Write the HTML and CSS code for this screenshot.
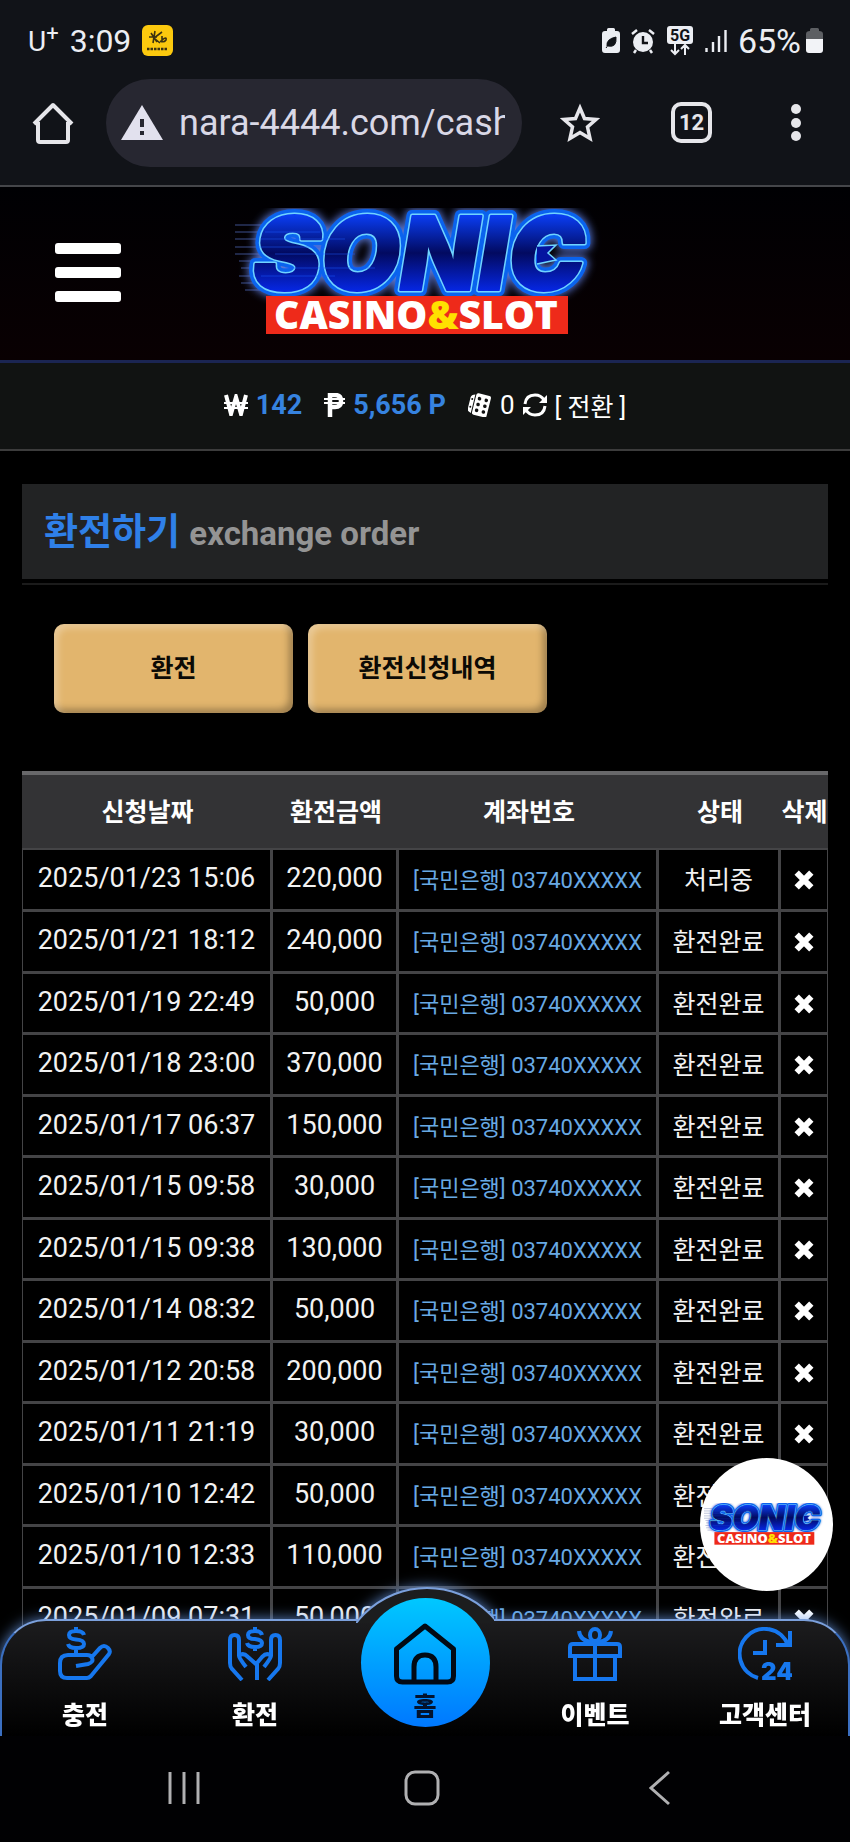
FILE: index.html
```html
<!DOCTYPE html>
<html lang="ko">
<head>
    <meta charset="UTF-8">
    <meta name="viewport" content="width=device-width, initial-scale=1.0">
    <title>환전하기</title>
    <link rel="stylesheet" href="styles.css">
</head>
<body>
    <!-- Shared shapes -->
    <svg class="defs" width="0" height="0" aria-hidden="true">
        <defs>
            <linearGradient id="logo-fill" x1="0" y1="0" x2="0" y2="1">
                <stop offset="0.2" stop-color="#0a3cf0"/>
                <stop offset="0.5" stop-color="#020a60"/>
                <stop offset="0.8" stop-color="#0626e0"/>
            </linearGradient>
            <filter id="logo-glow" x="-10%" y="-30%" width="120%" height="160%">
                <feGaussianBlur stdDeviation="4"/>
            </filter>
            <symbol id="logo" viewBox="0 0 380 130">
                <g stroke="#3d4f8c" stroke-width="1">
                    <path d="M0 17H40M-4 24H40M-4 31H38M-7 39H36M-2 46H34M4 53H30M6 60H26M4 68H22M6 75H24M10 82H26"/>
                </g>
                <g class="logo-word">
                    <text x="18" y="82" fill="#6b8cff" stroke="#5a78d8" stroke-width="14" filter="url(#logo-glow)">SONIC</text>
                    <text x="18" y="82" fill="#0a5ff0" stroke="#0a63ee" stroke-width="12">SONIC</text>
                    <text x="18" y="82" fill="#6fd3ff" stroke="#6fd3ff" stroke-width="5">SONIC</text>
                    <text x="18" y="82" fill="url(#logo-fill)" stroke="url(#logo-fill)" stroke-width="2">SONIC</text>
                </g>
                <path d="M302 38L321 37L313 45L321 52L302 56" fill="#0414a0" stroke="#6fd3ff" stroke-width="1.500"/>
                <g stroke="#1b5bff" stroke-width="1" opacity="0.5">
                    <path d="M30 24H85M26 31H110M24 39H90M40 46H120M50 60H140M26 68H100"/>
                </g>
                <rect x="31" y="88" width="302" height="38" fill="#ee2a1a"/>
                <text class="logo-sub" x="181" y="121" text-anchor="middle">CASINO<tspan fill="#ffe100">&amp;</tspan>SLOT</text>
            </symbol>
            <symbol id="times" viewBox="0 0 18 18">
                <path d="M3 3L15 15M15 3L3 15" stroke="#fff" stroke-width="5"/>
            </symbol>
        </defs>
    </svg>

    <!-- Phone status bar -->
    <div class="status-bar">
        <div class="status-left">
            <span class="carrier">U<sup>+</sup></span>
            <span class="clock">3:09</span>
            <svg width="31" height="31" viewBox="0 0 31 31">
                <rect width="31" height="31" rx="6" fill="#fcc90e"/>
                <path d="M7 12L15 12M9 8L15 17M13 6L11 18M20 7L12 13L18 18M20 11V16M20 15Q25 11 24 15Q22 18 18 16" fill="none" stroke="#3b3211" stroke-width="1.6"/>
                <path d="M5 24H26" stroke="#3b3211" stroke-width="2.4" stroke-dasharray="2.5 1"/>
            </svg>
        </div>
        <div class="status-right">
            <svg width="18" height="26" viewBox="0 0 18 26">
                <path d="M5 3V1.500Q5 0 6.500 0H11.500Q13 0 13 1.500V3H15Q18 3 18 6V22Q18 25 15 25H3Q0 25 0 22V6Q0 3 3 3Z" fill="#eceef3"/>
                <path d="M4 20L7 16M5 18Q4 11 14 9Q15 20 6 18" fill="#111318" stroke="#111318"/>
            </svg>
            <svg width="24" height="26" viewBox="0 0 24 26">
                <circle cx="12" cy="14" r="10" fill="#eceef3"/>
                <path d="M1 6L6 2M23 6L18 2M5 22L3 25M19 22L21 25" stroke="#eceef3" stroke-width="2.500"/>
                <path d="M12 8V15H17" fill="none" stroke="#111318" stroke-width="2.400"/>
            </svg>
            <svg class="network" width="28" height="30" viewBox="0 0 28 30">
                <rect x="1" width="26" height="18" rx="3" fill="#eceef3"/>
                <text x="14" y="15" text-anchor="middle">5G</text>
                <path d="M9 18V28M5 24L9 28L13 24M19 29V19M15 23L19 19L23 23" fill="none" stroke="#eceef3" stroke-width="2"/>
            </svg>
            <svg width="22" height="24" viewBox="0 0 22 24">
                <path d="M1.500 19V23M8 13V23M14 7V23M20.500 1V23" stroke="#eceef3" stroke-width="2.400"/>
            </svg>
            <span class="battery-level">65%</span>
            <svg width="17" height="25" viewBox="0 0 17 25">
                <path d="M4 3V1.500Q4 0 5.500 0H11.500Q13 0 13 1.500V3Q17 3 17 6V11H0V6Q0 3 4 3Z" fill="#5d5f63"/>
                <path d="M0 11H17V22Q17 25 14 25H3Q0 25 0 22Z" fill="#f2f3f7"/>
            </svg>
        </div>
    </div>

    <!-- Browser toolbar -->
    <div class="toolbar">
        <button class="icon-btn" aria-label="home">
            <svg width="42" height="42" viewBox="0 0 42 42" fill="none" stroke="#e6e6ea" stroke-width="4" stroke-linejoin="round">
                <path d="M2 22L21 3L40 22M6 20V38Q6 40 8 40H34Q36 40 36 38V20"/>
            </svg>
        </button>
        <label class="address">
            <svg width="42" height="36" viewBox="0 0 42 36">
                <path d="M21 0L42 35H0Z" fill="#e2e1ee"/>
                <path d="M21 14V22M21 26V30" stroke="#272731" stroke-width="4"/>
            </svg>
            <input type="text" value="nara-4444.com/cash" aria-label="address" readonly>
        </label>
        <button class="icon-btn" aria-label="bookmark">
            <svg width="40" height="40" viewBox="0 0 40 40">
                <path d="M20 5L24.500 15.500L36 16.500L27.500 24L30 35.500L20 29.500L10 35.500L12.500 24L4 16.500L15.500 15.500Z" fill="none" stroke="#e6e6ea" stroke-width="3.500"/>
            </svg>
        </button>
        <button class="tab-count">12</button>
        <button class="icon-btn" aria-label="menu">
            <svg width="12" height="40" viewBox="0 0 12 40" fill="#e6e6ea">
                <circle cx="6" cy="6" r="5"/>
                <circle cx="6" cy="20" r="5"/>
                <circle cx="6" cy="33" r="5"/>
            </svg>
        </button>
    </div>

    <!-- Site -->
    <div class="page">
        <header class="site-header">
            <button class="hamburger" aria-label="menu">
                <span></span>
                <span></span>
                <span></span>
            </button>
            <a class="site-logo" href="#" aria-label="SONIC CASINO&amp;SLOT">
                <svg width="380" height="130"><use href="#logo"/></svg>
            </a>
        </header>

        <div class="wallet">
            <svg width="24" height="22" viewBox="0 0 24 22">
                <path d="M2 1L7 20L12 3L17 20L22 1" fill="none" stroke="#fff" stroke-width="4"/>
                <path d="M0 9H24M0 14H24" stroke="#fff" stroke-width="2"/>
            </svg>
            <strong>142</strong>
            <svg class="point" width="21" height="25" viewBox="0 0 21 25">
                <path d="M6 24V2H11Q17 2 17 8Q17 14 11 14H6" fill="none" stroke="#fff" stroke-width="4.500"/>
                <path d="M0 6H21M0 10H21" stroke="#fff" stroke-width="2"/>
            </svg>
            <strong>5,656 P</strong>
            <svg class="dice" width="24" height="24" viewBox="0 0 24 24">
                <g transform="rotate(14 12 12)">
                    <rect x="6" y="1" width="15" height="22" rx="2" fill="#fff"/>
                    <path d="M5 3Q1 4 1 7V19Q1 21 5 22Z" fill="#fff"/>
                    <g fill="#111">
                        <circle cx="10" cy="6" r="1.800"/><circle cx="17" cy="6" r="1.800"/>
                        <circle cx="10" cy="12" r="1.800"/><circle cx="17" cy="12" r="1.800"/>
                        <circle cx="10" cy="18" r="1.800"/><circle cx="17" cy="18" r="1.800"/>
                        <circle cx="3" cy="8" r="1"/><circle cx="3" cy="16" r="1"/>
                    </g>
                </g>
            </svg>
            <span>0</span>
            <svg width="24" height="24" viewBox="0 0 24 24">
                <path d="M2 11Q3 2 12 2Q18 2 21 7M22 13Q21 22 12 22Q6 22 3 17" fill="none" stroke="#fff" stroke-width="3"/>
                <path d="M24 2V10H16ZM0 22V14H8Z" fill="#fff"/>
            </svg>
            <button class="convert">[ 전환 ]</button>
        </div>

        <main class="content">
            <h1 class="page-title">환전하기 <small>exchange order</small></h1>

            <div class="tabs">
                <button>환전</button>
                <button>환전신청내역</button>
            </div>

            <table class="history">
                <colgroup>
                    <col class="col-date">
                    <col class="col-amount">
                    <col>
                    <col class="col-state">
                    <col class="col-delete">
                </colgroup>
                <thead>
                    <tr><th>신청날짜</th><th>환전금액</th><th>계좌번호</th><th>상태</th><th>삭제</th></tr>
                </thead>
                <tbody>
                    <tr><td>2025/01/23 15:06</td><td>220,000</td><td class="account">[국민은행] 03740XXXXX</td><td class="state">처리중</td><td><button aria-label="삭제"><svg width="22" height="22"><use href="#times"/></svg></button></td></tr>
                    <tr><td>2025/01/21 18:12</td><td>240,000</td><td class="account">[국민은행] 03740XXXXX</td><td class="state">환전완료</td><td><button aria-label="삭제"><svg width="22" height="22"><use href="#times"/></svg></button></td></tr>
                    <tr><td>2025/01/19 22:49</td><td>50,000</td><td class="account">[국민은행] 03740XXXXX</td><td class="state">환전완료</td><td><button aria-label="삭제"><svg width="22" height="22"><use href="#times"/></svg></button></td></tr>
                    <tr><td>2025/01/18 23:00</td><td>370,000</td><td class="account">[국민은행] 03740XXXXX</td><td class="state">환전완료</td><td><button aria-label="삭제"><svg width="22" height="22"><use href="#times"/></svg></button></td></tr>
                    <tr><td>2025/01/17 06:37</td><td>150,000</td><td class="account">[국민은행] 03740XXXXX</td><td class="state">환전완료</td><td><button aria-label="삭제"><svg width="22" height="22"><use href="#times"/></svg></button></td></tr>
                    <tr><td>2025/01/15 09:58</td><td>30,000</td><td class="account">[국민은행] 03740XXXXX</td><td class="state">환전완료</td><td><button aria-label="삭제"><svg width="22" height="22"><use href="#times"/></svg></button></td></tr>
                    <tr><td>2025/01/15 09:38</td><td>130,000</td><td class="account">[국민은행] 03740XXXXX</td><td class="state">환전완료</td><td><button aria-label="삭제"><svg width="22" height="22"><use href="#times"/></svg></button></td></tr>
                    <tr><td>2025/01/14 08:32</td><td>50,000</td><td class="account">[국민은행] 03740XXXXX</td><td class="state">환전완료</td><td><button aria-label="삭제"><svg width="22" height="22"><use href="#times"/></svg></button></td></tr>
                    <tr><td>2025/01/12 20:58</td><td>200,000</td><td class="account">[국민은행] 03740XXXXX</td><td class="state">환전완료</td><td><button aria-label="삭제"><svg width="22" height="22"><use href="#times"/></svg></button></td></tr>
                    <tr><td>2025/01/11 21:19</td><td>30,000</td><td class="account">[국민은행] 03740XXXXX</td><td class="state">환전완료</td><td><button aria-label="삭제"><svg width="22" height="22"><use href="#times"/></svg></button></td></tr>
                    <tr><td>2025/01/10 12:42</td><td>50,000</td><td class="account">[국민은행] 03740XXXXX</td><td class="state">환전완료</td><td><button aria-label="삭제"><svg width="22" height="22"><use href="#times"/></svg></button></td></tr>
                    <tr><td>2025/01/10 12:33</td><td>110,000</td><td class="account">[국민은행] 03740XXXXX</td><td class="state">환전완료</td><td><button aria-label="삭제"><svg width="22" height="22"><use href="#times"/></svg></button></td></tr>
                    <tr><td>2025/01/09 07:31</td><td>50,000</td><td class="account">[국민은행] 03740XXXXX</td><td class="state">환전완료</td><td><button aria-label="삭제"><svg width="22" height="22"><use href="#times"/></svg></button></td></tr>
                </tbody>
            </table>
        </main>

        <a class="float-logo" href="#" aria-label="SONIC CASINO&amp;SLOT">
            <svg width="126" height="43" viewBox="0 0 380 130"><use href="#logo"/></svg>
        </a>

        <nav class="bottom-nav">
            <div class="nav-shape"><div class="bump"></div></div>
            <a href="#">
                <svg width="54" height="54" viewBox="0 0 54 54">
                    <path d="M18 39L30 37Q36 35 34 31Q33 28 29 28H10Q2 28 2 36V44Q2 51 9 51H29Q31 51 33 49L51 27Q53 24 50 21Q46 17 42 21L33 31"/>
                    <path d="M26 8Q25 4 18 4Q11 4 11 8Q11 12 18 12.500Q26 13 26 17Q26 21 18 21Q11 21 10 17M18 0V4M18 21V28"/>
                </svg>
                <span>충전</span>
            </a>
            <a href="#">
                <svg width="54" height="54" viewBox="0 0 54 54">
                    <path d="M14 53L4 42Q2 40 2 36V13Q2 8 6.500 8Q11 8 11 13V29Q11 31 18 40M11 29Q15 25 20 30L29 38V53M40 53L50 42Q52 40 52 36V13Q52 8 47.500 8Q43 8 43 13V29Q43 31 36 40M43 29Q39 25 34 30L29 36"/>
                    <path d="M34 8Q33 4 27 4Q20 4 20 8Q20 12 27 12Q34 13 34 16Q34 20 27 20Q20 20 19 16M27 0V4M27 20V24"/>
                </svg>
                <span>환전</span>
            </a>
            <a class="home" href="#">
                <svg width="62" height="62" viewBox="0 0 62 62">
                    <path d="M2.500 26L31 3L59.500 26V53Q59.500 59 53.500 59H8.500Q2.500 59 2.500 53ZM20 59V44Q20 32 31 32Q42 32 42 44V59"/>
                </svg>
                <span>홈</span>
            </a>
            <a href="#">
                <svg width="54" height="54" viewBox="0 0 54 54">
                    <path d="M5 17H49Q52 17 52 20V29H2V20Q2 17 5 17ZM7 30V52H47V30M27 16V52M11 4Q12 14 24 15M43 4Q42 14 30 15"/>
                    <ellipse cx="27" cy="8" rx="5" ry="6"/>
                </svg>
                <span>이벤트</span>
            </a>
            <a href="#">
                <svg width="54" height="54" viewBox="0 0 54 54">
                    <path d="M20 51A25 25 0 1 1 50 18M52 4V18H38M27 13V26H15"/>
                    <text x="39" y="53" text-anchor="middle">24</text>
                </svg>
                <span>고객센터</span>
            </a>
        </nav>
    </div>

    <!-- Phone navigation -->
    <div class="system-nav">
        <button aria-label="recent apps">
            <svg width="34" height="36" viewBox="0 0 34 36"><path d="M3 2V34M17 2V34M31 2V34"/></svg>
        </button>
        <button aria-label="home screen">
            <svg width="36" height="36" viewBox="0 0 36 36"><rect x="2" y="2" width="32" height="32" rx="9"/></svg>
        </button>
        <button aria-label="back">
            <svg width="22" height="36" viewBox="0 0 22 36"><path d="M20 2L2 18L20 34"/></svg>
        </button>
    </div>
</body>
</html>
```

FILE: styles.css
```css
/* Reset and basic styles */
* {
    margin: 0;
    padding: 0;
    box-sizing: border-box;
}

body {
    display: flex;
    flex-direction: column;
    height: 100vh;
    overflow: hidden;
    font-family: Roboto, "Noto Sans CJK KR", sans-serif;
    font-size: 26px;
    background-color: #000;
    color: #fff;
}

button {
    font: inherit;
    color: inherit;
    background: none;
    border: none;
    cursor: pointer;
}

a {
    color: inherit;
    text-decoration: none;
}

svg {
    display: block;
    flex-shrink: 0;
}

#logo {
    overflow: visible;
}

.defs {
    position: absolute;
}

/* Status bar */
.status-bar {
    display: flex;
    justify-content: space-between;
    align-items: center;
    height: 79px;
    padding: 2px 27px 0 28px;
    background-color: #111318;
    color: #eceef3;
    font-size: 32px;
}

.status-left,
.status-right {
    display: flex;
    align-items: center;
    gap: 11px;
}

.carrier {
    font-size: 28px;
}

.carrier sup {
    font-size: 22px;
    line-height: 1;
}

.network text {
    font-size: 16px;
    font-weight: 700;
    fill: #111318;
}

.battery-level {
    font-size: 34px;
    margin-right: -6px;
}

/* Browser toolbar */
.toolbar {
    display: flex;
    align-items: center;
    height: 108px;
    padding: 0 48px 19px 32px;
    background-color: #111318;
    border-bottom: 2px solid #45464a;
}

.toolbar button {
    flex-shrink: 0;
}

.address {
    display: flex;
    align-items: center;
    flex: 1;
    gap: 16px;
    min-width: 0;
    height: 88px;
    margin: 0 38px 0 32px;
    padding: 0 17px 0 15px;
    background-color: #272731;
    border-radius: 44px;
}

.address input {
    flex: 1;
    min-width: 0;
    font-family: Roboto, sans-serif;
    font-size: 36px;
    color: #d9d8e6;
    background: none;
    border: none;
    outline: none;
}

.tab-count {
    width: 41px;
    height: 41px;
    margin: 0 78px 0 71px;
    border: 4px solid #e6e6ea;
    border-radius: 10px;
    font-size: 22px;
    font-weight: 700;
    color: #e6e6ea;
}

/* Site page */
.page {
    position: relative;
    flex: 1;
    min-height: 0;
    overflow: hidden;
}

.site-header {
    display: grid;
    grid-template-columns: 1fr auto 1fr;
    align-items: center;
    height: 176px;
    padding: 0 55px 2px;
    background-image: linear-gradient(#000003, #090002);
    border-bottom: 3px solid #1b2552;
}

.hamburger {
    display: flex;
    flex-direction: column;
    gap: 13px;
    width: 66px;
}

.hamburger span {
    height: 11px;
    background-color: #fff;
    border-radius: 3px;
}

.logo-word {
    font-family: Inter, sans-serif;
    font-size: 102px;
    font-weight: 900;
    font-style: italic;
    stroke-linejoin: round;
}

.logo-sub {
    font-family: "Open Sans", sans-serif;
    font-size: 39px;
    font-weight: 800;
    fill: #fff;
}

.wallet {
    display: flex;
    justify-content: center;
    align-items: center;
    gap: 8px;
    height: 88px;
    padding-bottom: 2px;
    background-color: #111312;
    border-bottom: 2px solid #3c3c3c;
}

.wallet strong {
    font-size: 27px;
    font-weight: 700;
    color: #3683e0;
}

.wallet .point,
.wallet .dice {
    margin-left: 14px;
}

.convert {
    font-size: 25px;
}

/* Content */
.content {
    padding: 33px 22px 0;
}

.page-title {
    height: 95px;
    padding: 0 22px;
    line-height: 98px;
    font-size: 37px;
    font-weight: 700;
    color: #2f80e8;
    background-color: #222324;
    box-shadow: 0 4px #000, 0 6px #1b1b1b;
}

.page-title small {
    font-size: 33px;
    color: #949494;
}

.tabs {
    display: flex;
    gap: 15px;
    padding: 45px 32px 0;
}

.tabs button {
    width: 239px;
    height: 89px;
    padding-bottom: 6px;
    font-size: 25px;
    font-weight: 700;
    color: #0c0a05;
    background-color: #e2b56d;
    border-radius: 10px;
    box-shadow: inset 4px 4px 7px rgba(255, 255, 255, 0.3), inset -4px -4px 7px rgba(0, 0, 0, 0.3);
}

/* History table */
.history {
    width: 100%;
    margin-top: 58px;
    table-layout: fixed;
    border-spacing: 0;
    text-align: center;
    white-space: nowrap;
}

.col-date {
    width: 251px;
}

.col-amount {
    width: 126px;
}

.col-state {
    width: 122px;
}

.col-delete {
    width: 47px;
}

.history th {
    height: 77px;
    padding-bottom: 4px;
    font-size: 25px;
    font-weight: 700;
    background-color: #333335;
    border-top: 4px solid #68686a;
}

.history td {
    height: 61px;
    padding-bottom: 3px;
    font-size: 27px;
    color: #f2f2f2;
    border-right: 3px solid #444446;
    border-bottom: 3px solid #444446;
}

.history tr:nth-child(even) td {
    height: 62px;
}

.history tbody tr:first-child td {
    height: 64px;
    border-top: 2px solid #444446;
}

.history td:first-child {
    border-left: 1px solid #444446;
}

.history td:last-child {
    border-right-width: 1px;
}

.history .account {
    font-size: 22px;
    color: #68a9e4;
}

.history .state {
    font-size: 25px;
}

.history td button {
    display: block;
    margin: 4px auto 0;
}

/* Floating logo */
.float-logo {
    position: absolute;
    right: 17px;
    bottom: 145px;
    display: flex;
    justify-content: center;
    align-items: center;
    width: 133px;
    height: 133px;
    background-color: #fff;
    border-radius: 50%;
}

/* Bottom navigation */
.bottom-nav {
    position: absolute;
    left: 0;
    right: 0;
    bottom: 0;
    display: grid;
    grid-template-columns: repeat(5, 1fr);
    height: 117px;
}

.nav-shape {
    position: absolute;
    inset: 0;
    background-image: linear-gradient(#1c1c1e, #000);
    border: 2px solid #3b6fc0;
    border-top-color: #7ba0dc;
    border-bottom: none;
    border-radius: 46px 46px 0 0;
    filter: drop-shadow(0 0 7px rgba(110, 160, 240, 0.8));
}

.bump {
    position: absolute;
    left: 50%;
    top: -34px;
    width: 138px;
    height: 36px;
    margin-left: -69px;
    overflow: hidden;
}

.bump::before {
    content: "";
    position: absolute;
    left: -19px;
    top: 0;
    width: 176px;
    height: 176px;
    background-color: #1c1d1e;
    border: 2px solid #7ba0dc;
    border-radius: 50%;
}

.bottom-nav a {
    position: relative;
    display: flex;
    flex-direction: column;
    align-items: center;
    gap: 17px;
    padding-top: 8px;
    font-size: 25px;
    font-weight: 900;
    line-height: 36px;
}

.bottom-nav svg {
    fill: none;
    stroke: #1677ee;
    stroke-width: 4;
}

.bottom-nav text {
    font-family: Inter, sans-serif;
    font-size: 24px;
    font-weight: 900;
    fill: #1677ee;
    stroke: none;
}

.bottom-nav .home {
    gap: 4px;
    justify-self: center;
    width: 129px;
    height: 129px;
    margin-top: -21px;
    padding-top: 25px;
    color: #03132e;
    background-image: linear-gradient(#00c8ff, #0078ff);
    border-radius: 50%;
}

.bottom-nav .home svg {
    stroke: #020a14;
    stroke-width: 5;
    stroke-linejoin: round;
}

/* Phone navigation */
.system-nav {
    display: grid;
    grid-template-columns: repeat(3, 1fr);
    align-items: center;
    justify-items: center;
    height: 106px;
    padding: 0 71px 2px 65px;
    background-color: #010103;
}

.system-nav svg {
    fill: none;
    stroke: #b0b0b2;
    stroke-width: 3;
}
```
